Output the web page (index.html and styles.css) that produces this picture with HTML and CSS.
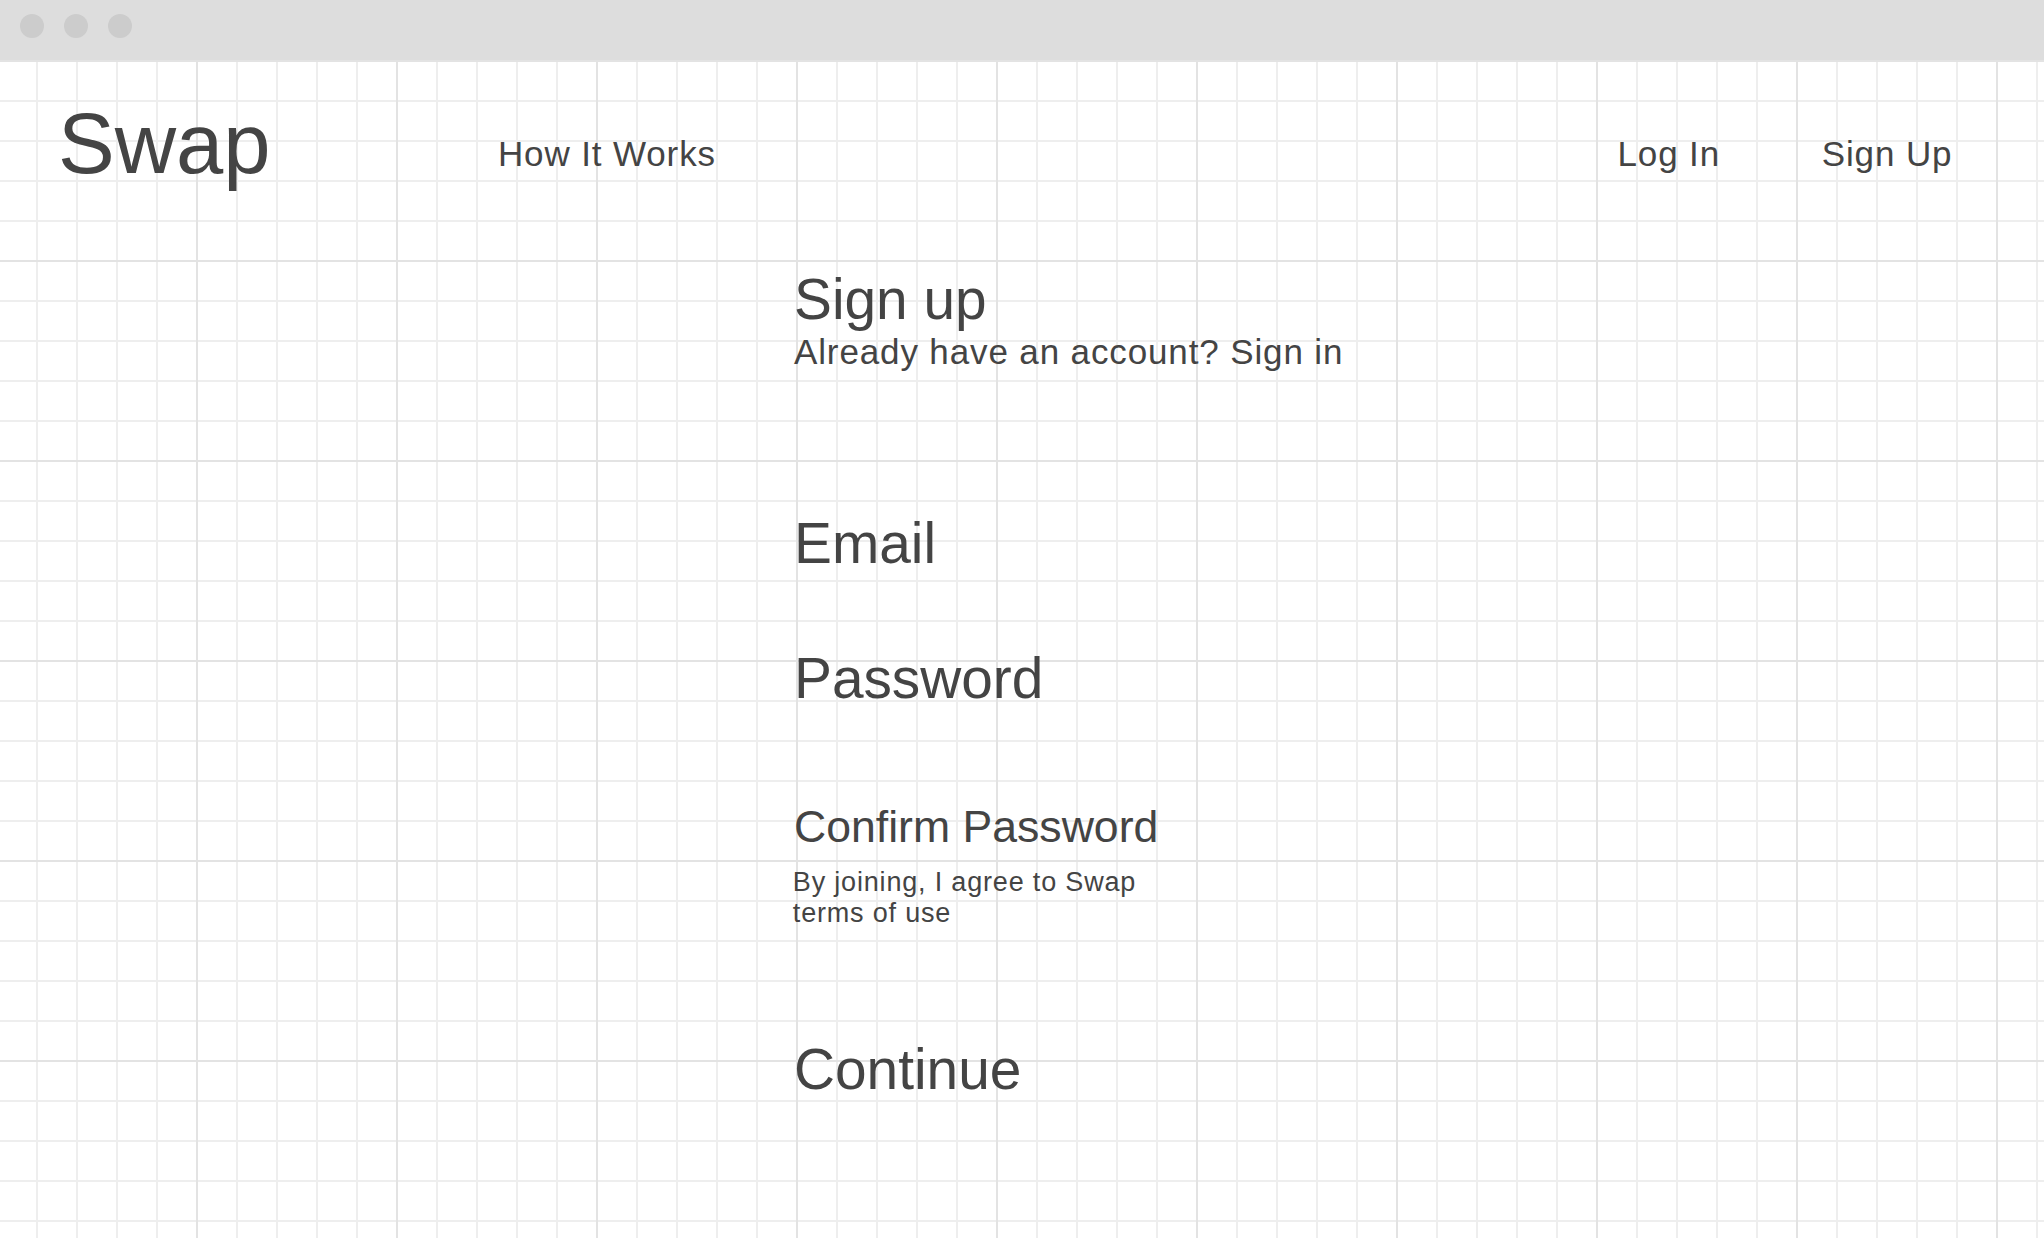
FILE: index.html
```html
<!DOCTYPE html>
<html lang="en">
<head>
<meta charset="utf-8">
<title>Swap – Sign up</title>
<link rel="stylesheet" href="styles.css">
</head>
<body>
  <div class="browser-bar">
    <span class="dot"></span>
    <span class="dot"></span>
    <span class="dot"></span>
  </div>
  <div class="page">
    <header class="site-header">
      <div class="logo">Swap</div>
      <nav class="main-nav"><a href="#">How It Works</a></nav>
      <nav class="auth-nav">
        <a href="#">Log In</a>
        <a href="#">Sign Up</a>
      </nav>
    </header>
    <main class="signup">
      <h1 class="signup-title">Sign up</h1>
      <p class="signup-sub">Already have an account? Sign in</p>
      <div class="field-label label-email">Email</div>
      <div class="field-label label-password">Password</div>
      <div class="field-label-small label-confirm">Confirm Password</div>
      <p class="terms">By joining, I agree to Swap terms of use</p>
      <div class="continue">Continue</div>
    </main>
  </div>
</body>
</html>
```

FILE: styles.css
```css
html, body {
  margin: 0;
  padding: 0;
}

body {
  font-family: "Liberation Sans", Arial, sans-serif;
  color: #444444;
  background: #ffffff;
  overflow: hidden;
}

.browser-bar {
  height: 60px;
  background: #dddddd;
  display: flex;
  align-items: flex-start;
  gap: 20px;
  padding: 14px 0 0 20px;
  box-sizing: border-box;
}

.dot {
  width: 24px;
  height: 24px;
  border-radius: 50%;
  background: #cccccc;
}

.page {
  min-height: 1178px;
  background-color: #ffffff;
  background-image:
    linear-gradient(to right, #e3e3e3 2px, transparent 2px),
    linear-gradient(to bottom, #e3e3e3 2px, transparent 2px),
    linear-gradient(to right, #eeeeee 2px, transparent 2px),
    linear-gradient(to bottom, #eeeeee 2px, transparent 2px);
  background-size: 200px 200px, 200px 200px, 40px 40px, 40px 40px;
  background-position: 196px 0, 0 0, 36px 0, 0 0;
}

.site-header {
  display: flex;
  align-items: flex-start;
  padding: 41px 91.6px 0 58px;
}

.logo {
  font-size: 85px;
  line-height: 1;
}

.main-nav,
.auth-nav {
  margin-top: 34.7px;
  font-size: 35px;
  line-height: 1;
  letter-spacing: 0.88px;
}

.main-nav {
  margin-left: 227.3px;
}

.auth-nav {
  margin-left: auto;
  display: flex;
  gap: 101.7px;
}

.site-header a {
  color: inherit;
  text-decoration: none;
}

.signup {
  margin: 86px 0 0 794px;
}

.signup-title {
  margin: 0;
  font-size: 56.8px;
  font-weight: normal;
  line-height: 1;
}

.signup-sub {
  margin: 5.1px 0 0;
  font-size: 35px;
  line-height: 1;
  letter-spacing: 0.87px;
}

.field-label {
  font-size: 56.8px;
  line-height: 1;
}

.label-email {
  margin-top: 147.4px;
}

.label-password {
  margin-top: 78.2px;
}

.field-label-small {
  font-size: 44.6px;
  line-height: 1;
}

.label-confirm {
  margin-top: 96.7px;
}

.terms {
  margin: 17.4px 0 0 -1.2px;
  max-width: 380px;
  font-size: 27px;
  line-height: 31.6px;
  letter-spacing: 0.82px;
}

.continue {
  margin-top: 112px;
  font-size: 56.8px;
  line-height: 1;
}
```
